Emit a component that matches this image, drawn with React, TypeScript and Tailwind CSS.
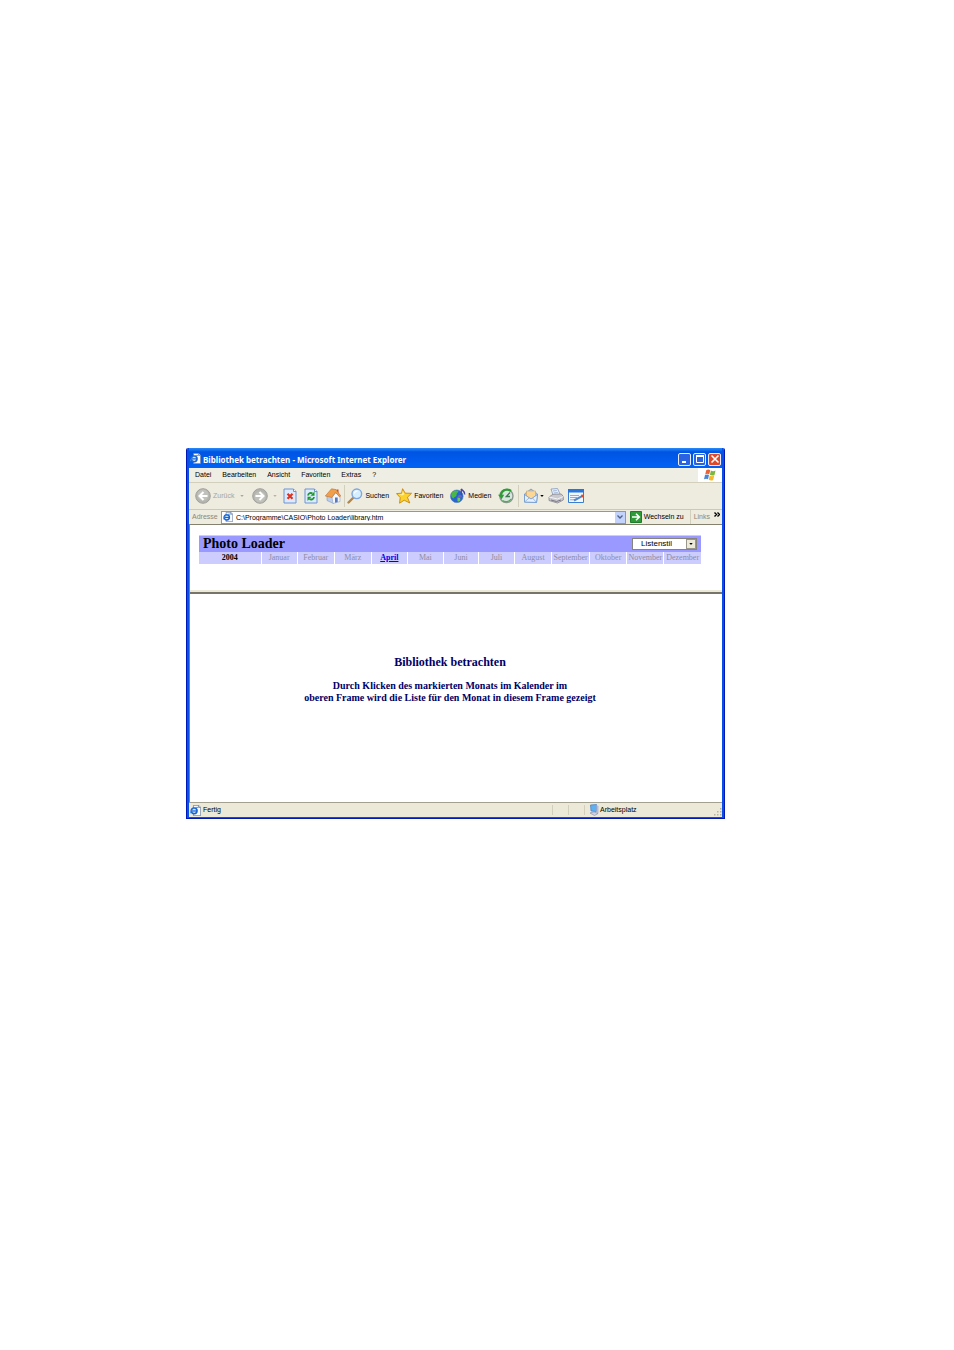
import type { ReactNode } from 'react'

const menuItems = ['Datei', 'Bearbeiten', 'Ansicht', 'Favoriten', 'Extras', '?']

const months = [
  { name: 'Januar', width: 'w-[36px]' },
  { name: 'Februar', width: 'w-[37px]' },
  { name: 'März', width: 'w-[37px]' },
  { name: 'April', width: 'w-[36px]' },
  { name: 'Mai', width: 'w-[36px]' },
  { name: 'Juni', width: 'w-[35px]' },
  { name: 'Juli', width: 'w-[36px]' },
  { name: 'August', width: 'w-[37px]' },
  { name: 'September', width: 'w-[38px]' },
  { name: 'Oktober', width: 'w-[37px]' },
  { name: 'November', width: 'w-[37px]' },
  { name: 'Dezember', width: 'w-[37px]' },
]

function PageIcon({ className }: { className: string }) {
  return (
    <svg viewBox="0 0 16 16" className={className} aria-hidden="true">
      <path d="M5 0.5H12.5L15.5 3.5V15.5H5Z" fill="#f7faff" stroke="#5b6f94" />
      <path d="M12.5 0.5V3.5H15.5" fill="#c3d2ee" stroke="#5b6f94" />
      <circle cx="6" cy="8.5" r="4.2" fill="#d8ecff" stroke="#1c62cf" strokeWidth="2.4" />
      <path d="M3 8.7H10" stroke="#1c62cf" strokeWidth="1.8" />
      <path d="M0.5 12C2 6 7 3 12 3.5" fill="none" stroke="#3d8de8" strokeWidth="1.3" />
    </svg>
  )
}

function ArrowCircle({ flip }: { flip?: boolean }) {
  return (
    <svg viewBox="0 0 16 16" className={flip ? 'size-4 shrink-0 rotate-180' : 'size-4 shrink-0'} aria-hidden="true">
      <circle cx="8" cy="8" r="7.3" fill="#b5b5b0" stroke="#a1a19c" />
      <circle cx="8" cy="7" r="5.5" fill="#c1c1bc" />
      <path d="M8.5 4L4.5 8L8.5 12M5 8H12.5" fill="none" stroke="#fff" strokeWidth="2" />
    </svg>
  )
}

function Caret({ className }: { className: string }) {
  return (
    <svg viewBox="0 0 5 3" className={className} aria-hidden="true">
      <path d="M0 0H5L2.5 3Z" fill="currentColor" />
    </svg>
  )
}

function StopIcon() {
  return (
    <svg viewBox="0 0 14 16" className="h-4 w-3.5" aria-hidden="true">
      <path d="M1 1H10.5L13 3.5V15H1Z" fill="#dceafd" stroke="#6e94cf" />
      <path d="M10.5 1V3.5H13" fill="#fff" stroke="#6e94cf" />
      <path d="M4.5 5.8L9.5 10.8M9.5 5.8L4.5 10.8" stroke="#e5311c" strokeWidth="2.2" />
    </svg>
  )
}

function RefreshIcon() {
  return (
    <svg viewBox="0 0 14 16" className="h-4 w-3.5" aria-hidden="true">
      <path d="M1 1H10.5L13 3.5V15H1Z" fill="#dceafd" stroke="#6e94cf" />
      <path d="M10.5 1V3.5H13" fill="#fff" stroke="#6e94cf" />
      <path d="M4 7.5C4.3 5 7 4.5 8.5 5.5" fill="none" stroke="#1d9a2c" strokeWidth="1.8" />
      <path d="M10.5 3.5V7.8H6.5Z" fill="#1d9a2c" />
      <path d="M10 9C9.7 11.5 7 12 5.5 11" fill="none" stroke="#1d9a2c" strokeWidth="1.8" />
      <path d="M3.5 13V8.7H7.5Z" fill="#1d9a2c" />
    </svg>
  )
}

function HomeIcon() {
  return (
    <svg viewBox="0 0 16 16" className="size-4" aria-hidden="true">
      <path d="M11.5 1.5H13.5V6H11.5Z" fill="#c8502c" />
      <path d="M2 8L5 5L8.5 9V15.5L2 12.5Z" fill="#b9cdec" stroke="#7f97c0" strokeWidth="0.6" />
      <path d="M7 9L11 5L15 9V13.5L8 15.5Z" fill="#f5f8ff" stroke="#8ea5cb" strokeWidth="0.6" />
      <path d="M10 9.5H12.7V14L10 14.8Z" fill="#5879b8" />
      <path d="M0.3 8L6.5 0.8L11 1.6L15.8 8L14.6 9L10.4 4.2L7 9.5Z" fill="#f0a04a" stroke="#c4702a" strokeWidth="0.6" />
    </svg>
  )
}

function SearchIcon() {
  return (
    <svg viewBox="0 0 16 16" className="size-4" aria-hidden="true">
      <path d="M6 10L1.5 14.5" stroke="#b38748" strokeWidth="2.4" strokeLinecap="round" />
      <circle cx="9.8" cy="5.8" r="4.8" fill="#d5efff" stroke="#7fa7dc" strokeWidth="1.4" />
      <path d="M7.3 5.5C7.5 3.8 9 3 10.5 3.2" fill="none" stroke="#fff" strokeWidth="1.2" />
    </svg>
  )
}

function StarIcon() {
  return (
    <svg viewBox="0 0 16 16" className="size-4" aria-hidden="true">
      <path
        d="M6.6 0.7L9.2 5.2L15.5 5.3L11.4 9.3L13.8 15L8.2 12.2L3.6 15.2L4.2 9.6L0.5 5.6L5.6 5.2Z"
        fill="#fbd22e"
        stroke="#c8880f"
        strokeWidth="0.9"
        strokeLinejoin="round"
      />
      <path d="M6.8 2.8L8.3 6.3L6 7.4L2.8 6.5L6.2 6.2Z" fill="#fff3a8" />
    </svg>
  )
}

function MediaIcon() {
  return (
    <svg viewBox="0 0 16 16" className="size-4" aria-hidden="true">
      <circle cx="6.8" cy="8.3" r="6.3" fill="#2766cf" stroke="#4a77b8" strokeWidth="0.6" />
      <path d="M2 4.5C4 2 7 2 8.5 3C8 5 6 5.5 6.5 7.5C5.5 9.5 4 8.5 3.5 10.5C1 9.5 0.7 6.5 2 4.5Z" fill="#4bb844" />
      <path d="M7.5 9.5C10 9 11 10.5 10 12.8C8.5 14.2 7 13.5 7.5 11.5Z" fill="#6fcc57" />
      <path d="M11.3 1V8" stroke="#4b479e" strokeWidth="1.3" />
      <path d="M11.3 0.8C12 3 15.3 2.8 14.6 6.5" fill="none" stroke="#4b479e" strokeWidth="1.5" />
      <ellipse cx="10" cy="8.3" rx="2" ry="1.5" fill="#6a66bd" />
    </svg>
  )
}

function HistoryIcon() {
  return (
    <svg viewBox="0 0 16 16" className="size-4" aria-hidden="true">
      <circle cx="8.4" cy="8" r="6.6" fill="#d8e6df" stroke="#8b978f" strokeWidth="1.4" />
      <path d="M13 3C9 0 3.5 2 2.8 7.5" fill="none" stroke="#2f9c35" strokeWidth="2.2" />
      <path d="M0 6.8H6.2L3.6 11.2Z" fill="#2f9c35" />
      <path d="M12 4.5L8.3 8.5H12" fill="none" stroke="#3e7a4a" strokeWidth="1.3" />
      <path d="M4.5 12.5C7 14.5 11 14 13 11" fill="none" stroke="#4fae52" strokeWidth="1.3" />
    </svg>
  )
}

function MailIcon() {
  return (
    <svg viewBox="0 0 16 16" className="size-4" aria-hidden="true">
      <path d="M1.5 6L8 1L14.5 6L13.5 14.5L1.5 14Z" fill="#a9c9f2" stroke="#6d95cc" strokeWidth="0.8" />
      <path d="M3.5 3H12.5V9L8 11.5L3.5 9Z" fill="#fcd694" stroke="#d9a95f" strokeWidth="0.7" />
      <path d="M1.5 6.5L8 11L14.5 6.5L13.5 14.5L1.5 14Z" fill="#e5f1ff" stroke="#6d95cc" strokeWidth="0.8" />
      <path d="M1.5 14L6.3 9.8M13.5 14.5L9.5 10" stroke="#86abd9" strokeWidth="0.8" />
    </svg>
  )
}

function PrinterIcon() {
  return (
    <svg viewBox="0 0 16 16" className="size-4" aria-hidden="true">
      <path d="M3 1L9.5 0.5L12.5 7L5.5 8.5Z" fill="#e5eefc" stroke="#8799bc" strokeWidth="0.8" />
      <path d="M5 3L8.8 2.5M5.8 5L9.8 4.5" stroke="#93a8ce" strokeWidth="0.8" />
      <path d="M1 9L5 6.3L13.3 6L15.3 8.5V12L9.5 15L1 12.5Z" fill="#c9c9cf" stroke="#85858e" strokeWidth="0.8" />
      <path d="M1 9L9.5 11L15.3 8.5" fill="none" stroke="#f4f4f6" />
      <path d="M3 12L8.5 13.5L13 12" fill="none" stroke="#777784" />
    </svg>
  )
}

function EditIcon() {
  return (
    <svg viewBox="0 0 16 14" className="h-3.5 w-4" aria-hidden="true">
      <path d="M0.5 0.5H15.5V13.5H0.5Z" fill="#f2f7ff" stroke="#3a7ed0" />
      <path d="M0 0H16V3.5H0Z" fill="#2976da" />
      <path d="M2 6.5H11M2 8.5H9M2 10.8H6" stroke="#a1a9b8" />
      <path d="M6 11.5L14.5 6.8" stroke="#5689c5" strokeWidth="2" />
      <path d="M13.3 6.5L16 7.5" stroke="#e04a2a" strokeWidth="2.4" />
    </svg>
  )
}

function WindowsFlag() {
  return (
    <svg viewBox="0 0 14 14" className="size-3.5" aria-hidden="true">
      <path d="M3.2 2.2C4.8 1.2 6 1.4 7.2 2.2L6.2 6.4C5 5.6 3.6 5.6 2.2 6.4Z" fill="#ec6237" />
      <path d="M7.9 2.6C9.4 3.5 10.9 3.5 12.5 2.6L11.5 6.9C9.9 7.7 8.4 7.6 6.9 6.8Z" fill="#7cb83c" />
      <path d="M2 7.1C3.5 6.3 4.8 6.3 6 7.1L5 11.3C3.8 10.5 2.4 10.5 1 11.3Z" fill="#4a85d8" />
      <path d="M6.7 7.5C8.2 8.4 9.7 8.4 11.3 7.6L10.2 11.9C8.7 12.7 7.2 12.6 5.7 11.7Z" fill="#f6b92c" />
    </svg>
  )
}

function ComputerIcon() {
  return (
    <svg viewBox="0 0 10 12" className="h-3 w-2.5" aria-hidden="true">
      <path d="M1.5 1L7.5 0.5V7.5L2 7Z" fill="#5fb2f2" stroke="#4b79bd" strokeWidth="0.7" />
      <path d="M7.5 1L9.5 2V9.5L7.5 8.5Z" fill="#b4bcda" />
      <path d="M1 9L5 7.8L9 9.5L5.5 11.5Z" fill="#cdd2e5" stroke="#7c86a8" strokeWidth="0.6" />
    </svg>
  )
}

function Divider() {
  return <span className="w-px self-stretch bg-[#d3cfbd]" />
}

function CaptionButton({ label, className, children }: { label: string; className: string; children: ReactNode }) {
  return (
    <button
      type="button"
      aria-label={label}
      className={`flex size-[13px] items-center justify-center rounded-xs border border-[#e6ecfb] ${className}`}
    >
      <svg viewBox="0 0 10 10" className="size-2.5" fill="none" stroke="#fff" aria-hidden="true">
        {children}
      </svg>
    </button>
  )
}

function TitleBar() {
  return (
    <header className="flex h-5 items-center bg-linear-to-b from-[#2b8bf8] via-[#0054e3] via-20% to-[#0062f6] pr-px pl-px">
      <PageIcon className="mr-0.5 size-[11px]" />
      <h1 className="grow pt-1 font-['Noto_Sans',sans-serif] text-[8px] leading-3 font-bold whitespace-nowrap text-white">
        Bibliothek betrachten - Microsoft Internet Explorer
      </h1>
      <div className="flex gap-0.5 pt-0.5">
        <CaptionButton label="Minimieren" className="bg-[#2a63e2]">
          <path d="M2 8H6" strokeWidth="2" />
        </CaptionButton>
        <CaptionButton label="Maximieren" className="bg-[#2a63e2]">
          <path d="M1.5 2.5H8.5V8.5H1.5Z" />
          <path d="M1 2H9" strokeWidth="2" />
        </CaptionButton>
        <CaptionButton label="Schließen" className="bg-[#e0492a]">
          <path d="M1.5 1.5L8.5 8.5M8.5 1.5L1.5 8.5" strokeWidth="1.6" />
        </CaptionButton>
      </div>
    </header>
  )
}

function MenuBar() {
  return (
    <nav className="flex h-[15px] items-stretch border-b border-[#d3cfbd] bg-[#efeee4]">
      <div className="flex grow items-center gap-[11px] pl-1.5">
        {menuItems.map((item) => (
          <button key={item} type="button">
            {item}
          </button>
        ))}
      </div>
      <div className="flex w-6 items-center justify-center bg-white">
        <WindowsFlag />
      </div>
    </nav>
  )
}

function Toolbar() {
  return (
    <div className="flex h-[27px] items-center border-b border-[#cdc9b5] bg-[#eeebdf] pl-1.5">
      <button type="button" className="flex items-center gap-0.5 text-[#a8a698]">
        <ArrowCircle />
        Zurück
        <Caret className="ml-1 h-0.5 w-1" />
      </button>
      <button type="button" aria-label="Vorwärts" className="ml-2 flex items-center gap-[5px] text-[#b5b3a5]">
        <ArrowCircle flip />
        <Caret className="h-0.5 w-1" />
      </button>
      <div className="ml-1.5 flex items-center gap-[7px]">
        <button type="button" aria-label="Abbrechen">
          <StopIcon />
        </button>
        <button type="button" aria-label="Aktualisieren">
          <RefreshIcon />
        </button>
        <button type="button" aria-label="Startseite">
          <HomeIcon />
        </button>
      </div>
      <span className="ml-[3px] flex self-stretch py-0.5">
        <Divider />
      </span>
      <div className="ml-0.5 flex items-center gap-[7px]">
        <button type="button" className="flex items-center gap-0.5">
          <SearchIcon />
          Suchen
        </button>
        <button type="button" className="flex items-center gap-0.5">
          <StarIcon />
          Favoriten
        </button>
        <button type="button" className="flex items-center gap-0.5">
          <MediaIcon />
          Medien
        </button>
        <button type="button" aria-label="Verlauf">
          <HistoryIcon />
        </button>
      </div>
      <span className="ml-1 flex self-stretch py-0.5">
        <Divider />
      </span>
      <div className="ml-1 flex items-center gap-1">
        <button type="button" aria-label="E-Mail" className="flex items-center gap-px">
          <MailIcon />
          <Caret className="h-0.5 w-1" />
        </button>
        <button type="button" aria-label="Drucken">
          <PrinterIcon />
        </button>
        <button type="button" aria-label="Bearbeiten">
          <EditIcon />
        </button>
      </div>
    </div>
  )
}

function AddressBar() {
  return (
    <div className="flex h-3.5 items-center bg-[#eeebdf] pl-[3px]">
      <label htmlFor="address" className="w-[29px] text-[#8b897b]">
        Adresse
      </label>
      <div className="flex h-[13px] grow items-center border border-[#7f9db9] bg-white pl-px">
        <PageIcon className="size-2.5 shrink-0" />
        <input
          id="address"
          type="text"
          defaultValue="C:\Programme\CASIO\Photo Loader\library.htm"
          className="h-full min-w-0 grow pl-[3px] leading-[11px] outline-none"
        />
        <button
          type="button"
          aria-label="Adressliste"
          className="flex h-full w-2.5 items-center justify-center bg-[#c3d3fb]"
        >
          <svg viewBox="0 0 6 4" className="h-1 w-1.5" aria-hidden="true">
            <path d="M0.5 0.5L3 3L5.5 0.5" fill="none" stroke="#4d6185" strokeWidth="1.3" />
          </svg>
        </button>
      </div>
      <button type="button" className="ml-1 flex items-center gap-0.5">
        <svg viewBox="0 0 12 12" className="size-3" aria-hidden="true">
          <path d="M0.5 0.5H11.5V11.5H0.5Z" fill="#2d9c38" stroke="#1f7c2a" />
          <path d="M2 6H9M6 2.8L9.3 6L6 9.2" fill="none" stroke="#fff" strokeWidth="1.6" />
        </svg>
        Wechseln zu
      </button>
      <span className="ml-1.5 flex self-stretch">
        <Divider />
      </span>
      <button type="button" className="ml-[3px] flex items-center gap-1 pr-0.5 text-[#8b897b]">
        Links
        <svg
          viewBox="0 0 6 5"
          className="mb-1.5 h-[5px] w-1.5"
          fill="none"
          stroke="#000"
          strokeWidth="1.4"
          aria-hidden="true"
        >
          <path d="M0.5 0.5L2.5 2.5L0.5 4.5M3.5 0.5L5.5 2.5L3.5 4.5" />
        </svg>
      </button>
    </div>
  )
}

function CalendarFrame() {
  return (
    <section className="h-[66px] border-t border-[#84826f] bg-white pt-2.5 pr-[21px] pl-[9px] font-['Liberation_Serif',serif]">
      <div className="flex h-[17px] items-center justify-between border-t border-[#ccccff] bg-[#9999ff] px-1">
        <h2 className="text-[14px] leading-4 font-bold">Photo Loader</h2>
        <div className="relative h-3 w-[65px] border border-[#85837a] bg-white font-['Liberation_Sans',sans-serif]">
          <select
            aria-label="Ansicht"
            className="block h-full w-full appearance-none pl-2 text-[8px] leading-[10px] outline-none"
          >
            <option>Listenstil</option>
          </select>
          <span className="pointer-events-none absolute inset-y-0 right-0 flex w-2.5 items-center justify-center border border-[#99968a] bg-[#ece9d8]">
            <Caret className="h-0.5 w-1" />
          </span>
        </div>
      </div>
      <table className="w-full table-fixed border-collapse text-[8px] leading-3">
        <tbody>
          <tr className="h-3 bg-[#ccccff] text-center">
            <th scope="row" className="w-[62px] p-0 font-bold">
              2004
            </th>
            {months.map(({ name, width }) => (
              <td key={name} className={`border-l border-white p-0 text-[#8c8ca4] ${width}`}>
                {name === 'April' ? (
                  <a href="#april" className="font-bold text-[#0000ee] underline">
                    {name}
                  </a>
                ) : (
                  name
                )}
              </td>
            ))}
          </tr>
        </tbody>
      </table>
    </section>
  )
}

function LibraryFrame() {
  return (
    <section className="h-[210px] border-t-2 border-[#77756a] bg-white pt-[60px] pr-3 text-center font-['Liberation_Serif',serif] font-bold text-[#000066]">
      <h2 className="text-[12px] leading-4">Bibliothek betrachten</h2>
      <p className="mt-2.5 text-[10px] leading-3">
        Durch Klicken des markierten Monats im Kalender im
        <br />
        oberen Frame wird die Liste für den Monat in diesem Frame gezeigt
      </p>
    </section>
  )
}

function StatusBar() {
  return (
    <footer className="flex h-[15px] items-center border-t border-[#a3a08f] bg-[#ece9d8] pl-px">
      <PageIcon className="size-[11px]" />
      <span className="grow pl-0.5">Fertig</span>
      <div className="flex items-center gap-[15px] self-stretch py-0.5">
        <Divider />
        <Divider />
        <Divider />
      </div>
      <div className="flex w-[137px] items-center gap-px pl-1">
        <ComputerIcon />
        <span className="grow">Arbeitsplatz</span>
        <svg viewBox="0 0 8 8" className="mt-1 size-2" fill="#b8b4a2" aria-hidden="true">
          <path d="M6 0H7.5V1.5H6ZM6 3H7.5V4.5H6ZM6 6H7.5V7.5H6ZM3 3H4.5V4.5H3ZM3 6H4.5V7.5H3ZM0 6H1.5V7.5H0Z" />
        </svg>
      </div>
    </footer>
  )
}

export default function App() {
  return (
    <main className="min-h-screen bg-white pt-[448px] pr-[229px] pb-16 pl-[186px] font-['Liberation_Sans',sans-serif] text-[7px] leading-[10px] text-black">
      <div className="overflow-hidden rounded-t-xs border-x border-b border-[#0019b5]">
        <div className="border-x-2 border-b border-[#0850e6]">
          <TitleBar />
          <MenuBar />
          <Toolbar />
          <AddressBar />
          <div className="border-l border-[#84826f]">
            <CalendarFrame />
            <div className="h-0.5 bg-[#ece9d8]" />
            <LibraryFrame />
          </div>
          <StatusBar />
        </div>
      </div>
    </main>
  )
}
